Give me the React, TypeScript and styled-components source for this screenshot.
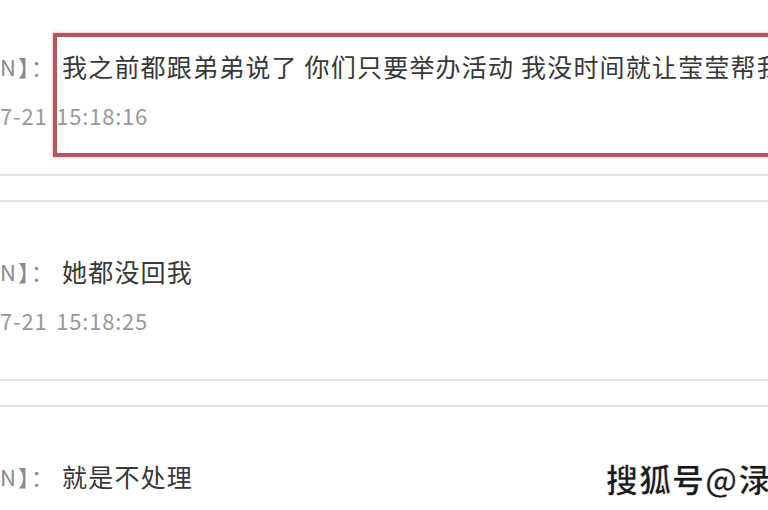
import styled, { createGlobalStyle } from "styled-components";

const GlobalStyle = createGlobalStyle`
  html, body {
    margin: 0;
    padding: 0;
    background: #ffffff;
    overflow: hidden;
  }
  body {
    font-family: "Noto Sans CJK SC", "Noto Sans", sans-serif;
  }
`;

const Page = styled.div`
  position: relative;
  width: 768px;
  height: 510px;
  overflow: hidden;
  background: #fff;
`;

const List = styled.div`
  display: flex;
  flex-direction: column;
  gap: 24px;
  margin-top: -5px;
`;

const Item = styled.div`
  border-top: 2px solid #e2e2e2;
  border-bottom: 2px solid #e2e2e2;
  padding: 49px 0 44px;
`;

const Row = styled.div`
  display: flex;
  align-items: center;
  height: 40px;
  white-space: nowrap;
`;

const Name = styled.span`
  font-size: 22px;
  color: #8a8a8a;
  width: 62px;
  flex-shrink: 0;
  letter-spacing: 2px;
`;

const Message = styled.span`
  font-size: 25px;
  color: #383838;
  letter-spacing: 1.2px;
`;

const Time = styled.div`
  margin-top: 14px;
  line-height: 30px;
  font-size: 22px;
  color: #999;
  letter-spacing: 0.8px;
  word-spacing: 3px;
  white-space: nowrap;
`;

const Highlight = styled.div`
  position: absolute;
  left: 53px;
  top: 33px;
  width: 760px;
  height: 116px;
  border: 4px solid #b5565c;
  box-shadow: 0 0 3px rgba(225, 130, 135, 0.7);
  pointer-events: none;
`;

const Watermark = styled.div`
  position: absolute;
  left: 606px;
  top: 455px;
  font-size: 32px;
  font-weight: 700;
  color: #1a1a1a;
  letter-spacing: 1px;
  white-space: nowrap;
  -webkit-text-stroke: 0.6px #ffffff;
`;

type Msg = { name: string; text: string; time?: string };

const messages: Msg[] = [
  {
    name: "N】：",
    text: "我之前都跟弟弟说了 你们只要举办活动 我没时间就让莹莹帮我",
    time: "7-21 15:18:16",
  },
  { name: "N】：", text: "她都没回我", time: "7-21 15:18:25" },
  { name: "N】：", text: "就是不处理" },
];

const App: React.FC = () => {
  return (
    <Page>
      <GlobalStyle />
      <List>
        {messages.map((m, i) => (
          <Item key={i}>
            <Row>
              <Name>{m.name}</Name>
              <Message>{m.text}</Message>
            </Row>
            {m.time && <Time>{m.time}</Time>}
          </Item>
        ))}
      </List>
      <Highlight />
      <Watermark>搜狐号@渌</Watermark>
    </Page>
  );
};

export default App;
